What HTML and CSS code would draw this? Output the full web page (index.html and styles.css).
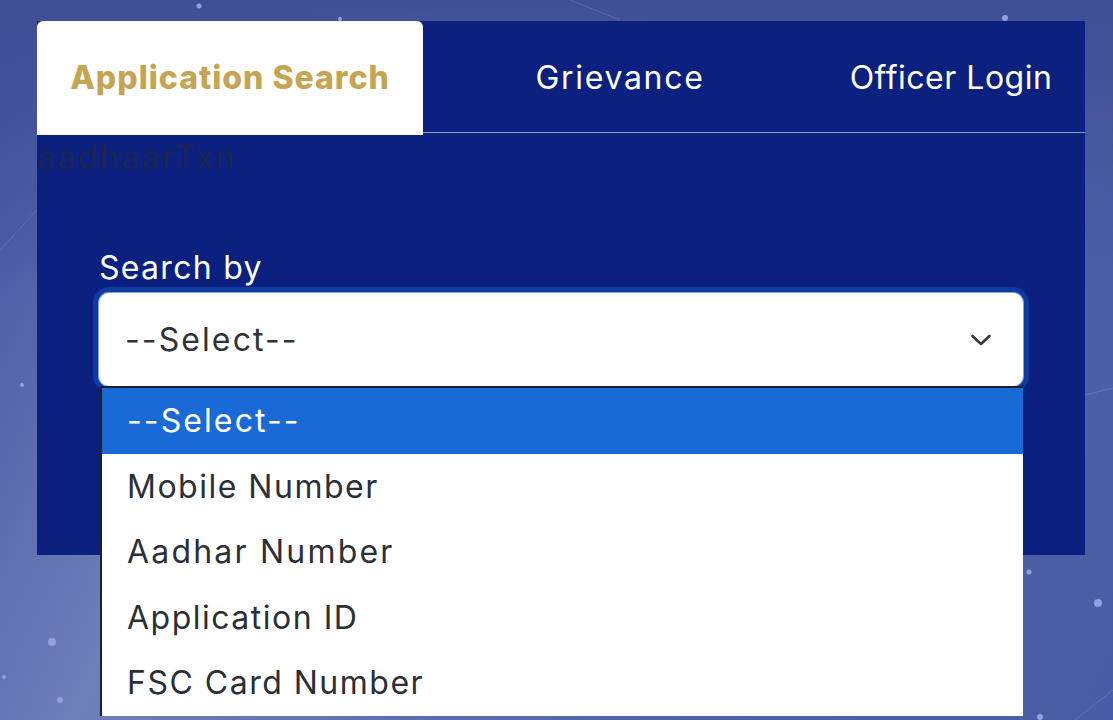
FILE: index.html
```html
<!DOCTYPE html>
<html lang="en">
<head>
  <meta charset="UTF-8">
  <meta name="viewport" content="width=device-width, initial-scale=1.0">
  <link rel="stylesheet" href="styles.css">
  <title>Application Search</title>
</head>
<body>

<svg class="sky" width="1113" height="720" viewBox="0 0 1113 720">
  <g stroke="#8d9ad0" stroke-width="1" opacity="0.35">
    <line x1="1085" y1="395" x2="1113" y2="388"/>
    <line x1="0" y1="250" x2="37" y2="210"/>
    <line x1="1075" y1="720" x2="1113" y2="690"/>
    <line x1="570" y1="0" x2="620" y2="20"/>
  </g>
  <g fill="#93a2dc">
    <circle cx="199" cy="6" r="2.5"/>
    <circle cx="340" cy="19" r="2"/>
    <circle cx="1005" cy="18" r="3"/>
    <circle cx="1029" cy="572" r="2.5"/>
    <circle cx="1098" cy="603" r="4"/>
    <circle cx="1040" cy="717" r="3"/>
    <circle cx="52" cy="642" r="4"/>
    <circle cx="4" cy="677" r="2"/>
    <circle cx="60" cy="700" r="3"/>
    <circle cx="22" cy="385" r="2"/>
  </g>
</svg>

<div class="card">
  <div class="tabs">
    <div class="tab active">Application Search</div>
    <div class="tab grievance">Grievance</div>
    <div class="tab officer">Officer Login</div>
  </div>

  <div class="txn">aadhaarTxn</div>

  <div class="form">
    <div class="lbl">Search by</div>
    <div class="selectWrap">
      <div class="selectBox">
        <span class="dashed">--Select--</span>
        <svg width="24" height="24" viewBox="0 0 24 24" fill="none" stroke="#343a40" stroke-width="2.6" stroke-linecap="round" stroke-linejoin="round"><path d="M3.500 8l8.500 8 8.500-8"/></svg>
      </div>
      <div class="options">
        <div class="opt selected dashed">--Select--</div>
        <div class="opt">Mobile Number</div>
        <div class="opt wider">Aadhar Number</div>
        <div class="opt">Application ID</div>
        <div class="opt">FSC Card Number</div>
      </div>
    </div>
  </div>
</div>

</body>
</html>
```

FILE: styles.css
```css
body {
  margin: 0;
  height: 720px;
  overflow: hidden;
  padding: 21px 28px 0 37px;
  box-sizing: border-box;
  font-family: 'Inter', 'Open Sans', sans-serif;
  background: linear-gradient(115deg, #4050a0 0%, #6f7fb9 28%, #4f62a8 70%, #4a5ca5 100%);
  position: relative;
}

body::before {
  content: "";
  position: absolute;
  left: 0;
  top: 0;
  width: 100%;
  height: 300px;
  background: linear-gradient(#3f4f96, rgba(63, 79, 150, 0));
}

.sky {
  position: absolute;
  left: 0;
  top: 0;
}

.card {
  position: relative;
  height: 534px;
  background-color: #0b207f;
}

.tabs {
  display: grid;
  grid-template-columns: 386px 394px 1fr;
  height: 112px;
  border-bottom: 1.5px solid #8b97cf;
  box-sizing: border-box;
}

.tab {
  display: flex;
  align-items: center;
  justify-content: center;
  height: 112px;
  color: #fff;
  font-size: 32px;
}

.tab.active {
  height: 114px;
  padding-bottom: 2px;
  box-sizing: border-box;
  background-color: #fff;
  color: #c6a552;
  font-weight: 800;
  letter-spacing: 1px;
  border-radius: 6px 6px 0 0;
}

.tab.grievance {
  letter-spacing: 1.7px;
}

.tab.officer {
  letter-spacing: 0.5px;
}

.txn {
  height: 44px;
  line-height: 50px;
  font-size: 32px;
  letter-spacing: 2.4px;
  color: #1b2550;
}

.form {
  padding: 69px 62px 0;
}

.lbl {
  font-size: 32px;
  line-height: 44px;
  letter-spacing: 1.3px;
  color: #fff;
}

.selectWrap {
  position: relative;
  margin-top: 3px;
}

.selectBox {
  display: flex;
  align-items: center;
  justify-content: space-between;
  height: 93px;
  box-sizing: border-box;
  padding: 0 30px 0 26px;
  background-color: #fff;
  border-radius: 10px;
  box-shadow: 0 0 0 1px #7ea5ea, 0 0 0 6px #0f3a9e;
  font-size: 32px;
  color: #2f3338;
}

.options {
  position: absolute;
  left: 1px;
  right: 0;
  top: 93px;
  height: 330px;
  overflow: hidden;
  box-sizing: border-box;
  border-left: 2px solid #1b2030;
  border-top: 2px solid #1b2030;
  background-color: #fff;
  font-size: 32px;
  letter-spacing: 1.5px;
  color: #2b2f36;
}

.opt {
  height: 65.5px;
  line-height: 65.5px;
  padding-left: 25px;
}

.opt.wider {
  letter-spacing: 2.2px;
}

.dashed {
  letter-spacing: 2.1px;
}

.opt.selected {
  background-color: #1a6ad6;
  color: #fff;
}
```
